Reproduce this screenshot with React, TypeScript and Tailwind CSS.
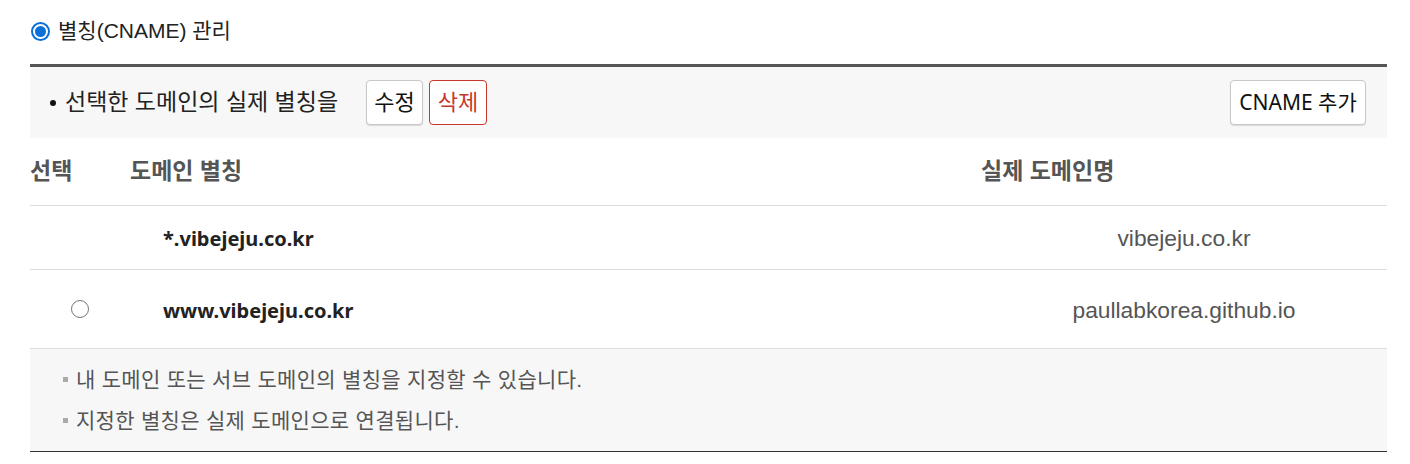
import React from "react";

const sans = "font-['Liberation_Sans','Noto_Sans_CJK_KR',sans-serif]";
const noto = "font-['Noto_Sans','Noto_Sans_CJK_KR',sans-serif]";

type Row = { alias: string; real: string; selectable: boolean; h: string };

const rows: Row[] = [
  { alias: "*.vibejeju.co.kr", real: "vibejeju.co.kr", selectable: false, h: "h-[64px]" },
  { alias: "www.vibejeju.co.kr", real: "paullabkorea.github.io", selectable: true, h: "h-[79px]" },
];

function Radio({ checked }: { checked?: boolean }) {
  if (checked) {
    return (
      <span className="flex h-[19px] w-[19px] items-center justify-center rounded-full border-2 border-[#0a6fd8] bg-white">
        <span className="h-[11px] w-[11px] rounded-full bg-[#0a6fd8]" />
      </span>
    );
  }
  return <span className="block h-[18px] w-[18px] rounded-full border-[1.5px] border-[#777] bg-white" />;
}

export default function App() {
  return (
    <main className={`min-h-screen bg-white pt-[18px] ${sans}`}>
      <div className="ml-[30px] w-[1357px]">
        <div className="flex h-[26px] items-center gap-[8px] pl-[1px] text-[21px] text-[#222]">
          <Radio checked />
          <span>별칭(CNAME) 관리</span>
        </div>

        <div className="mt-[20px] border-t-[3px] border-[#555]">
          {/* toolbar */}
          <div className="flex h-[71px] items-center justify-between bg-[#f7f7f7] pl-[20px] pr-[21px]">
            <div className="flex items-center">
              <span className="mr-[9px] h-[6px] w-[6px] rounded-full bg-[#111]" />
              <span className="text-[23px] text-[#222]">선택한 도메인의 실제 별칭을</span>
              <div className="ml-[28px] flex gap-[6px]">
                <button className="h-[45px] w-[57px] rounded-[4px] border border-[#c8c8c8] bg-white text-[22px] text-[#111] shadow-[0_1px_1px_rgba(0,0,0,0.12)]">
                  수정
                </button>
                <button className="h-[45px] w-[58px] rounded-[4px] border border-[#c9372c] bg-white text-[22px] text-[#c9372c]">
                  삭제
                </button>
              </div>
            </div>
            <button
              className={`h-[45px] w-[136px] rounded-[4px] border border-[#c8c8c8] bg-white text-[21px] text-[#111] shadow-[0_1px_1px_rgba(0,0,0,0.12)] ${noto}`}
            >
              CNAME 추가
            </button>
          </div>

          {/* header */}
          <div className="flex h-[68px] items-center border-b border-[#ddd] text-[23px] font-bold text-[#555]">
            <div className="w-[100px]">선택</div>
            <div className="w-[851px]">도메인 별칭</div>
            <div className="flex-1">실제 도메인명</div>
          </div>

          {rows.map((r) => (
            <div key={r.alias} className={`flex items-center border-b border-[#ddd] ${r.h}`}>
              <div className="flex w-[100px] justify-center">{r.selectable && <Radio />}</div>
              <div className={`w-[851px] pl-[33px] pt-[3px] text-[20px] font-bold text-[#222] ${noto}`}>{r.alias}</div>
              <div className="flex-1 pt-[2px] text-center text-[22.8px] text-[#555]">{r.real}</div>
            </div>
          ))}

          {/* notes */}
          <div className="flex h-[103px] flex-col justify-center gap-[9px] border-b border-[#333] bg-[#f7f7f7] pl-[33px] text-[21px] tracking-[0.3px] text-[#555]">
            <div className="flex items-center">
              <span className="mr-[8px] h-[5px] w-[5px] bg-[#aaa]" />내 도메인 또는 서브 도메인의 별칭을 지정할 수 있습니다.
            </div>
            <div className="flex items-center">
              <span className="mr-[8px] h-[5px] w-[5px] bg-[#aaa]" />지정한 별칭은 실제 도메인으로 연결됩니다.
            </div>
          </div>
        </div>
      </div>
    </main>
  );
}
